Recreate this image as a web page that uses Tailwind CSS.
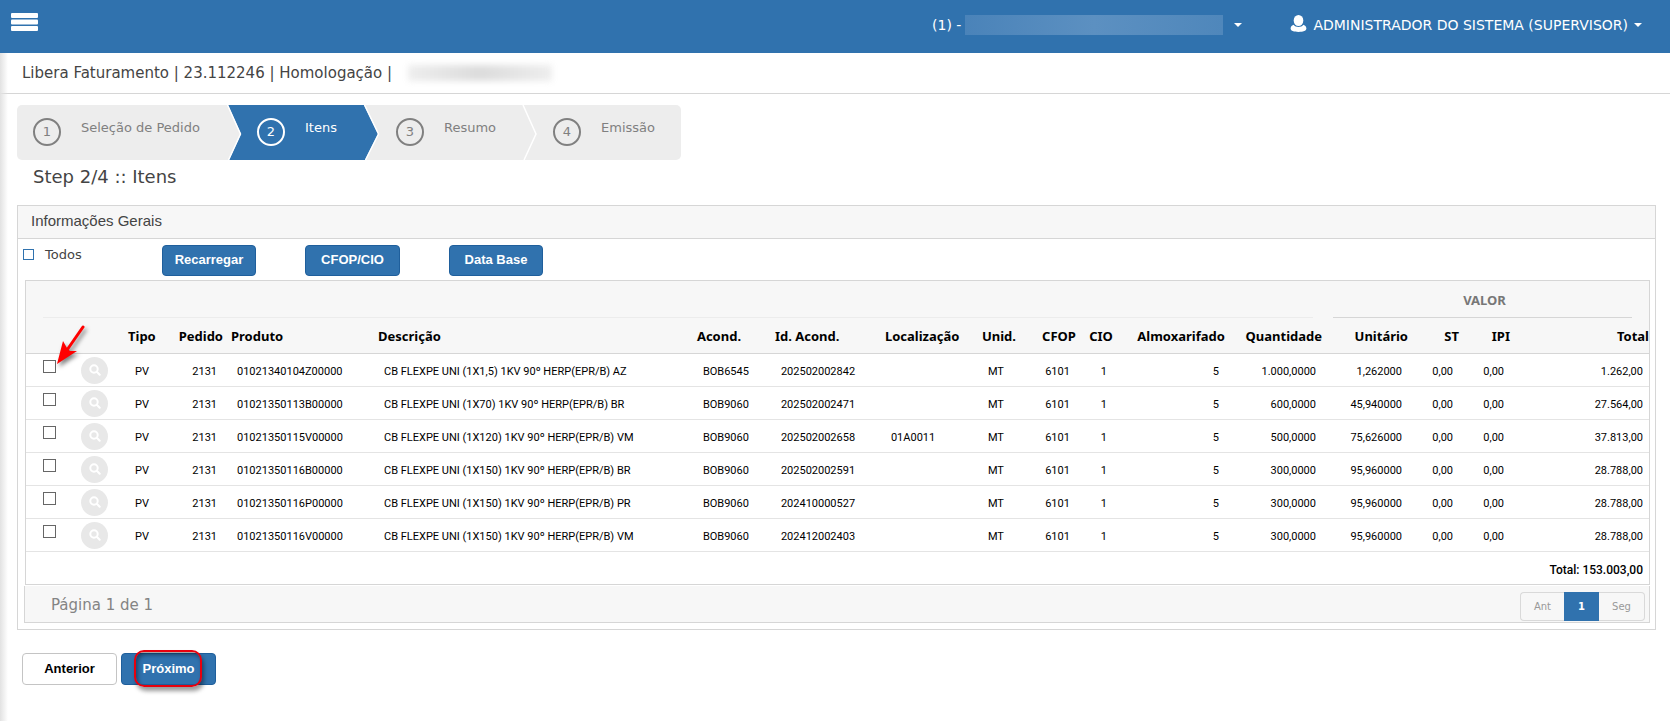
<!DOCTYPE html>
<html lang="pt-BR">
<head>
  <meta charset="UTF-8" />
  <meta name="viewport" content="width=device-width, initial-scale=1" />
  <title>Libera Faturamento</title>
  <script src="https://cdn.jsdelivr.net/npm/@tailwindcss/browser@4"></script>
</head>
<body class="relative min-h-screen bg-white font-['DejaVu_Sans',Verdana,sans-serif] text-[13px] text-[#444]">
  <!-- Barra superior -->
  <header class="relative z-10 flex h-[53px] items-start justify-between bg-[#3072ae] text-white">
    <button type="button" aria-label="Menu" class="ml-[11px] mt-[13px]">
      <svg width="27" height="18" viewBox="0 0 27 18" fill="#fff">
        <rect width="27" height="5" rx="1" />
        <rect y="6.5" width="27" height="5" rx="1" />
        <rect y="13" width="27" height="5" rx="1" />
      </svg>
    </button>
    <nav class="mr-7 flex h-[50px] items-center text-[14px]">
      <button type="button" aria-label="Empresa" class="flex items-center">
        <span>(1) -</span>
        <span class="ml-1 h-5 w-[258px] bg-linear-to-r from-[#4a83b9] via-[#5c90c1] to-[#4f87bb]"></span>
        <svg class="ml-[11px]" width="8" height="4" viewBox="0 0 8 4" fill="#fff"><path d="M0 0h8L4 4z" /></svg>
      </button>
      <button type="button" class="ml-12 flex items-center">
        <svg class="mr-[6px] mb-1" width="17" height="17" viewBox="0 0 17 17" fill="#fff">
          <ellipse cx="8.5" cy="5.5" rx="4.8" ry="5.5" />
          <path d="M3.6 9.8C1.5 10.6.6 12 .6 13.6.6 16 4 17 8.5 17s7.9-1 7.9-3.4c0-1.6-.9-3-3-3.8C12.3 11.3 10.5 12 8.5 12s-3.8-.7-4.9-2.200z" />
        </svg>
        <span>ADMINISTRADOR DO SISTEMA (SUPERVISOR)</span>
        <svg class="ml-[6px]" width="8" height="4" viewBox="0 0 8 4" fill="#fff"><path d="M0 0h8L4 4z" /></svg>
      </button>
    </nav>
  </header>
  <div class="absolute top-[53px] bottom-0 left-0 w-2 bg-linear-to-r from-[#e2e2e2] to-transparent"></div>

  <div class="flex h-[41px] items-center border-b border-[#d6d6d6] pl-[22px] text-[15px]">
    <h1>Libera Faturamento | 23.112246 | Homologação |</h1>
    <span class="ml-4 h-4 w-36 bg-linear-to-r from-[#eee] via-[#dcdcdc] to-[#eee] blur-[3px]"></span>
  </div>

  <main class="px-[14px] pt-[11px] pl-[17px]">
    <!-- Etapas -->
    <ol class="relative flex h-[55px] w-[664px] overflow-hidden rounded-[5px] bg-[#ededed] text-[13px] text-[#808080]">
      <svg class="absolute inset-0" width="664" height="55" viewBox="0 0 664 55" fill="none">
        <path d="M211 0L224 29L212 55H348L361 29L347 0z" fill="#3072ae" />
        <path d="M210.5 0L223.5 29L211.5 55M347.5 0L361.5 29L348.5 55M506 0L519 29L507 55" stroke="#fff" stroke-width="1.5" />
      </svg>
      <li class="relative flex w-[224px] pl-4">
        <span class="mt-[13px] flex size-7 items-center justify-center rounded-full border-2 border-[#808080]">1</span>
        <a href="#" class="ml-5 mt-[13px]">Seleção de Pedido</a>
      </li>
      <li class="relative flex w-[139px] pl-4 text-white" aria-current="step">
        <span class="mt-[13px] flex size-7 items-center justify-center rounded-full border-2 border-white">2</span>
        <a href="#" class="ml-5 mt-[13px]">Itens</a>
      </li>
      <li class="relative flex w-[157px] pl-4">
        <span class="mt-[13px] flex size-7 items-center justify-center rounded-full border-2 border-[#808080]">3</span>
        <a href="#" class="ml-5 mt-[13px]">Resumo</a>
      </li>
      <li class="relative flex pl-4">
        <span class="mt-[13px] flex size-7 items-center justify-center rounded-full border-2 border-[#808080]">4</span>
        <a href="#" class="ml-5 mt-[13px]">Emissão</a>
      </li>
    </ol>
    <h2 class="mt-[5px] pl-4 text-[18px] leading-6">Step 2/4 :: Itens</h2>

    <!-- Painel -->
    <section class="mt-[16px] border border-[#d6d6d6]">
      <h3 class="h-[33px] border-b border-[#d6d6d6] bg-[#f7f7f7] pl-[13px] font-['Liberation_Sans',Arial,sans-serif] text-[15px] leading-[30px]">Informações Gerais</h3>
      <div class="flex h-[41px] items-start pl-[5px] pt-[6px]">
        <label class="flex w-[139px] items-center gap-[11px] text-[13px]">
          <input type="checkbox" class="size-[11px] appearance-none border border-[#3072ae] bg-white" />
          Todos
        </label>
        <div class="flex gap-[49px] font-['Liberation_Sans',Arial,sans-serif] text-[13px] font-bold text-white">
          <button type="button" class="h-[31px] w-[94px] rounded-[4px] border border-[#1f5f9c] bg-[#3072ae] pb-[2px]">Recarregar</button>
          <button type="button" class="h-[31px] w-[95px] rounded-[4px] border border-[#1f5f9c] bg-[#3072ae] pb-[2px]">CFOP/CIO</button>
          <button type="button" class="h-[31px] w-[94px] rounded-[4px] border border-[#1f5f9c] bg-[#3072ae] pb-[2px]">Data Base</button>
        </div>
      </div>

      <div class="relative mr-[5px] ml-[7px] border border-[#d6d6d6]">
        <table class="w-full table-fixed border-separate border-spacing-0 text-black">
          <colgroup>
            <col class="w-[40px]" /><col class="w-[58px]" /><col class="w-[36px]" /><col class="w-[71px]" />
            <col class="w-[147px]" /><col /><col class="w-[78px]" /><col class="w-[110px]" />
            <col class="w-[97px]" /><col class="w-[54px]" /><col class="w-[48px]" /><col class="w-[37px]" />
            <col class="w-[112px]" /><col class="w-[97px]" /><col class="w-[86px]" /><col class="w-[51px]" />
            <col class="w-[51px]" /><col class="w-[131px]" />
          </colgroup>
          <thead class="bg-[#f7f7f7] font-['Noto_Sans',Tahoma,sans-serif] text-[13px] whitespace-nowrap">
            <tr class="h-[37px]">
              <td colspan="14" class="p-0"><div class="mx-[17px] h-[37px] border-b border-[#ececec]"></div></td>
              <th colspan="4" class="p-0 text-[#777]"><div class="mr-[17px] ml-[3px] h-[37px] border-b border-[#d6d6d6] pl-1 leading-[39px]">VALOR</div></th>
            </tr>
            <tr class="h-[36px] text-left *:border-b *:border-[#d6d6d6] *:p-0 *:pt-[3px] *:pr-2">
              <td></td>
              <td></td>
              <th><div class="pl-1">Tipo</div></th>
              <th class="text-right">Pedido</th>
              <th>Produto</th>
              <th>Descrição</th>
              <th>Acond.</th>
              <th>Id. Acond.</th>
              <th>Localização</th>
              <th>Unid.</th>
              <th class="text-right">CFOP</th>
              <th class="text-right">CIO</th>
              <th class="text-right">Almoxarifado</th>
              <th class="text-right">Quantidade</th>
              <th class="text-right">Unitário</th>
              <th class="text-right">ST</th>
              <th class="text-right">IPI</th>
              <th class="text-right"><div class="-mr-2">Total</div></th>
            </tr>
          </thead>
          <tbody id="itens" class="font-[Roboto,sans-serif] text-[11px] whitespace-nowrap"></tbody>
          <tfoot>
            <tr class="h-[32px]">
              <td colspan="18" class="pr-[6px] pt-1 text-right font-[Roboto,sans-serif] text-[12px] font-medium">Total: 153.003,00</td>
            </tr>
          </tfoot>
        </table>

        <!-- Seta de destaque -->
        <svg class="pointer-events-none absolute top-[42px] left-[28px] drop-shadow-[2px_3px_2px_rgba(0,0,0,0.5)]" width="36" height="46" viewBox="0 0 36 46">
          <path d="M29 4L13 27" stroke="#f00" stroke-width="3" stroke-linecap="round" />
          <path d="M3 41L9 18L13 25L16 28L23 28z" fill="#f00" />
        </svg>
      </div>

      <div class="mr-[5px] ml-[6px] mt-[1px] mb-[6px] flex h-[37px] items-center justify-between border border-t-0 border-[#d6d6d6] bg-[#f7f7f7] pt-1 pr-1 pl-[26px]">
        <span class="pb-[2px] text-[15px] text-[#848484]">Página 1 de 1</span>
        <div class="flex h-[29px] text-[10px] text-[#999]">
          <button type="button" class="w-[44px] rounded-l-[4px] border border-r-0 border-[#d9d9d9]">Ant</button>
          <button type="button" class="w-[35px] bg-[#3072ae] font-bold text-white">1</button>
          <button type="button" class="w-[46px] rounded-r-[4px] border border-l-0 border-[#d9d9d9]">Seg</button>
        </div>
      </div>
    </section>

    <div class="mt-[23px] flex gap-1 pl-[5px] font-['Liberation_Sans',Arial,sans-serif] text-[13px] font-bold">
      <button type="button" class="h-8 w-[95px] rounded-[4px] border border-[#c4c4c4] bg-white text-black">Anterior</button>
      <button type="button" class="relative h-8 w-[95px] rounded-[4px] border border-[#1f5f9c] bg-[#3072ae] text-white">
        Próximo
        <span class="absolute -top-1 left-3 h-[37px] w-[68px] rounded-[10px] border-2 border-[#e8000d] shadow-[2px_4px_4px_rgba(0,0,0,0.4),inset_2px_3px_4px_rgba(0,0,0,0.4)]"></span>
      </button>
    </div>
  </main>

  <script>
    const itens = [
      ["01021340104Z00000", "CB FLEXPE UNI (1X1,5) 1KV 90º HERP(EPR/B) AZ", "BOB6545", "202502002842", "", "1.000,0000", "1,262000", "1.262,00"],
      ["01021350113B00000", "CB FLEXPE UNI (1X70) 1KV 90º HERP(EPR/B) BR", "BOB9060", "202502002471", "", "600,0000", "45,940000", "27.564,00"],
      ["01021350115V00000", "CB FLEXPE UNI (1X120) 1KV 90º HERP(EPR/B) VM", "BOB9060", "202502002658", "01A0011", "500,0000", "75,626000", "37.813,00"],
      ["01021350116B00000", "CB FLEXPE UNI (1X150) 1KV 90º HERP(EPR/B) BR", "BOB9060", "202502002591", "", "300,0000", "95,960000", "28.788,00"],
      ["01021350116P00000", "CB FLEXPE UNI (1X150) 1KV 90º HERP(EPR/B) PR", "BOB9060", "202410000527", "", "300,0000", "95,960000", "28.788,00"],
      ["01021350116V00000", "CB FLEXPE UNI (1X150) 1KV 90º HERP(EPR/B) VM", "BOB9060", "202412002403", "", "300,0000", "95,960000", "28.788,00"],
    ];

    // células de texto: alinhadas à esquerda ou à direita
    const left = (v) => `<td class="border-b border-[#e4e4e4] p-0 pt-[5px] pl-[6px]">${v}</td>`;
    const right = (v) => `<td class="border-b border-[#e4e4e4] p-0 pt-[5px] pr-[14px] text-right">${v}</td>`;

    document.getElementById("itens").innerHTML = itens
      .map(([produto, descricao, acond, idAcond, local, qtd, unit, total]) => `
        <tr class="h-[33px]">
          <td class="border-b border-[#e4e4e4] p-0 pl-[17px] align-top">
            <input type="checkbox" aria-label="Selecionar ${produto}" class="mt-[6px] block size-[13px] appearance-none border border-[#666] bg-white" />
          </td>
          <td class="border-b border-[#e4e4e4] p-0 pl-[15px]">
            <button type="button" aria-label="Detalhes ${produto}" class="flex size-[27px] items-center justify-center rounded-full bg-[#e8e8e8]">
              <svg width="12" height="12" viewBox="0 0 12 12" fill="none" stroke="#fff" stroke-width="2" stroke-linecap="round">
                <circle cx="5" cy="5" r="3.7" />
                <path d="M8 8l2.7 2.7" />
              </svg>
            </button>
          </td>
          <td class="border-b border-[#e4e4e4] p-0 pt-[5px] pl-[11px]">PV</td>
          ${right("2131")}${left(produto)}${left(descricao)}${left(acond)}${left(idAcond)}${left(local)}${left("MT")}
          ${right("6101")}${right("1")}${right("5")}${right(qtd)}${right(unit)}${right("0,00")}${right("0,00")}
          <td class="border-b border-[#e4e4e4] p-0 pt-[5px] pr-[6px] text-right">${total}</td>
        </tr>`)
      .join("");
  </script>
</body>
</html>
